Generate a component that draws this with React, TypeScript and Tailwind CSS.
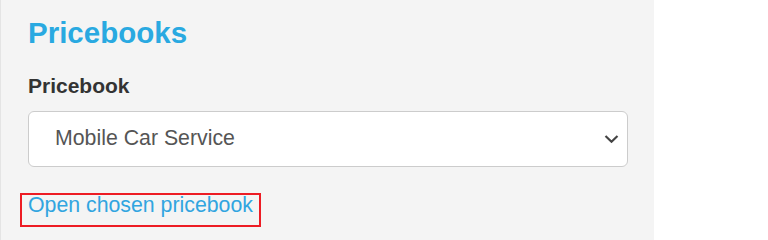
import { FC } from "react";

const Chevron: FC = () => (
  <svg
    className="pointer-events-none absolute right-[9px] top-1/2 -translate-y-1/2"
    width="15"
    height="9"
    viewBox="0 0 15 9"
    fill="none"
  >
    <path d="M1.5 1.5 L7.5 7.2 L13.5 1.5" stroke="#444444" strokeWidth="2.2" />
  </svg>
);

const App: FC = () => {
  return (
    <div className="flex min-h-screen bg-white font-['Liberation_Sans',Arial,sans-serif]">
      <div className="w-[654px] border-l border-[#e4e4e4] bg-[#f4f4f4] pl-[27px] pt-[15px]">
        <h1 className="text-[29.5px] font-bold leading-[1.2] text-[#29a9e1]">Pricebooks</h1>

        <label className="mt-[20px] block text-[21px] font-bold leading-[1.5] text-[#333333]">
          Pricebook
        </label>

        <div className="relative mt-[9px] w-[600px]">
          <select
            className="h-[56px] w-full appearance-none rounded-[6px] border border-[#cccccc] bg-white pl-[26px] text-[21.3px] text-[#555555] outline-none"
            defaultValue="mobile"
          >
            <option value="mobile">Mobile Car Service</option>
            <option value="workshop">Workshop Service</option>
          </select>
          <Chevron />
        </div>

        <a
          href="#"
          className="-ml-[8px] mt-[26px] block w-fit border-2 border-[#ed1c24] px-[6px] pb-[9px] text-[21.3px] leading-[21px] text-[#31a5e0]"
        >
          Open chosen pricebook
        </a>
      </div>
    </div>
  );
};

export default App;
